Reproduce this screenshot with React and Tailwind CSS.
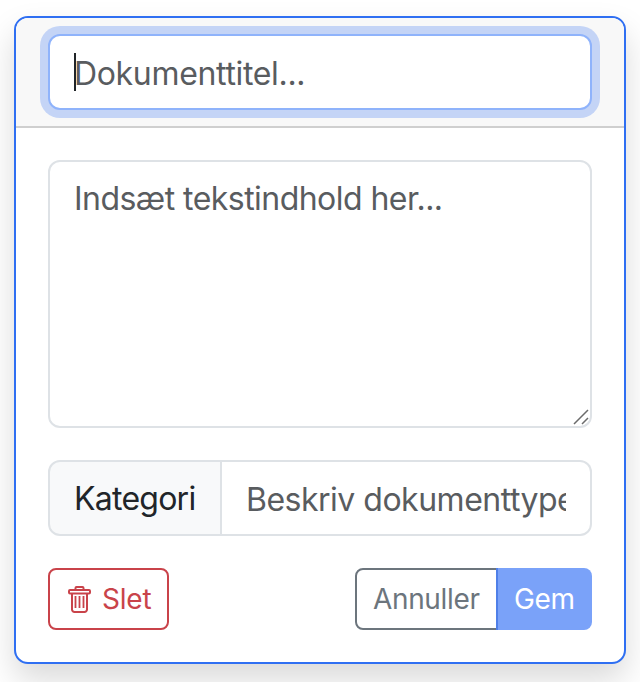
import React from "react";

function TrashIcon() {
  return (
    <svg width="24" height="27" viewBox="0 0 24 27" fill="none" stroke="currentColor" strokeWidth="2" className="shrink-0">
      <rect x="1" y="4" width="21" height="3.5" rx="1" />
      <path d="M7.5 3.5V2a1 1 0 0 1 1-1h6a1 1 0 0 1 1 1v1.5" />
      <path d="M4 8v15.5a2.5 2.5 0 0 0 2.5 2.5h10a2.5 2.5 0 0 0 2.5-2.5V8" />
      <path d="M7.5 10v12M11.5 10v12M15.5 10v12" strokeWidth="1.8" />
    </svg>
  );
}

export default function App() {
  return (
    <div className="w-[640px] h-[682px] overflow-hidden bg-white pt-[16px] px-[14px] font-['Inter','Liberation_Sans',sans-serif]">
      <div className="w-[612px] h-[648px] bg-white border-2 border-[#2f6ff2] rounded-[14px] overflow-hidden shadow-[0_16px_32px_rgba(0,0,0,0.15)] flex flex-col">
        <div className="h-[110px] shrink-0 bg-[#f8f8f8] border-b-2 border-[#cfcfcf] px-[32px] pt-[16px]">
          <div className="relative">
            <input
              placeholder="Dokumenttitel..."
              className="block w-full h-[76px] bg-white border-2 border-[#8fb3fb] rounded-[12px] pl-[24px] pr-[24px] pt-[2px] text-[32px] leading-[48px] tracking-[-0.33px] outline-none shadow-[0_0_0_8px_#c4d4f6] placeholder:text-[#595c5f] caret-transparent"
            />
            <span className="absolute left-[26px] top-[19px] w-[2px] h-[38px] bg-[#212529]" />
          </div>
        </div>
        <div className="flex-1 px-[32px] pt-[32px] flex flex-col">
          <div className="relative h-[268px] shrink-0">
            <textarea
              placeholder="Indsæt tekstindhold her..."
              className="block w-full h-full bg-white border-2 border-[#dee2e6] rounded-[12px] px-[24px] pt-[13px] pb-[11px] text-[32px] leading-[48px] tracking-[-0.54px] outline-none placeholder:text-[#595c5f] resize-none"
            />
            <svg width="16" height="16" viewBox="0 0 16 16" fill="none" stroke="#6b6b6b" strokeWidth="1.5" className="absolute right-[3px] bottom-[3px]">
              <path d="M1 15 15 1M9 15l6-6" />
            </svg>
          </div>
          <div className="mt-[32px] flex h-[76px] shrink-0">
            <span className="flex items-center h-full w-[174px] pl-[24px] pt-[2px] bg-[#f8f9fa] border-2 border-[#dee2e6] rounded-l-[12px] text-[32px] leading-[48px] tracking-[-0.75px] text-[#212529]">
              Kategori
            </span>
            <input
              placeholder="Beskriv dokumenttype"
              className="flex-1 min-w-0 h-full bg-white border-2 border-l-0 border-[#dee2e6] rounded-r-[12px] px-[24px] pt-[2px] text-[32px] leading-[48px] tracking-[-0.5px] outline-none placeholder:text-[#595c5f]"
            />
          </div>
          <div className="mt-[32px] flex items-center justify-between">
            <button className="flex items-center gap-[10px] h-[62px] w-[121px] pl-[18px] bg-white border-2 border-[#c9434a] rounded-[8px] text-[28px] leading-[42px] tracking-[-0.2px] text-[#c9434a]">
              <TrashIcon />
              Slet
            </button>
            <div className="flex">
              <button className="h-[62px] w-[143px] pl-[16px] text-left bg-white border-2 border-[#6c757d] rounded-l-[8px] text-[28px] leading-[42px] tracking-[-0.35px] text-[#6c757d]">
                Annuller
              </button>
              <button className="h-[62px] w-[96px] -ml-[2px] relative pl-[16px] text-left bg-[#7aa2f9] border-l-2 border-[#4f7fe8] rounded-r-[8px] text-[28px] leading-[42px] tracking-[-0.4px] text-white">
                Gem
              </button>
            </div>
          </div>
        </div>
      </div>
    </div>
  );
}
